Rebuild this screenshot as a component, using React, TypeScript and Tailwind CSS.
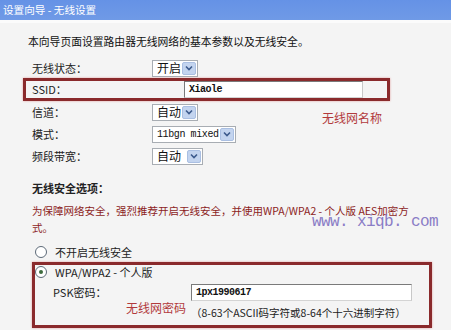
import React from "react";

const cjk = "font-['Noto_Sans_CJK_SC','Noto_Sans',sans-serif]";
const mono = "font-['Liberation_Mono',monospace]";

const Arrow = () => (
  <span className="ml-auto mr-[1px] flex h-[13px] w-[14px] items-center justify-center rounded-[2px] bg-[#c3d4ef] border border-[#aabfe2]">
    <svg width="8" height="6" viewBox="0 0 8 6">
      <path d="M1 1.5 L4 4.5 L7 1.5" fill="none" stroke="#3c5a8c" strokeWidth="1.6" />
    </svg>
  </span>
);

const Select = ({ value, width, isMono }: { value: string; width: string; isMono?: boolean }) => (
  <div className={`flex h-[17px] items-center border border-[#a8adb3] bg-white pl-[4px] ${width}`}>
    <span className={isMono ? `${mono} text-[10px] tracking-[-0.4px] text-[#111]` : "text-[12px] text-[#111]"}>{value}</span>
    <Arrow />
  </div>
);

const Input = ({ value, width }: { value: string; width: string }) => (
  <div className={`flex h-[17px] items-center border border-[#7a7a7a] border-r-[#c8c8c8] border-b-[#d4d4d4] bg-white pl-[4px] ${width}`}>
    <span className={`${mono} text-[10px] font-bold tracking-[-0.5px] text-[#111]`}>{value}</span>
  </div>
);

const Radio = ({ checked }: { checked?: boolean }) => (
  <span className="flex h-[12px] w-[12px] items-center justify-center rounded-full border border-[#5d6a78] bg-white">
    {checked && <span className="h-[4px] w-[4px] rounded-full bg-[#3d6b3d]" />}
  </span>
);

const Row = ({ label, children }: { label: string; children: React.ReactNode }) => (
  <div className="flex h-[22px] items-center">
    <div className="w-[152px] pl-[32px]">{label}</div>
    {children}
  </div>
);

const App = () => {
  return (
    <div className={`relative h-[330px] w-[451px] overflow-hidden bg-[#f4f4f4] text-[11px] text-[#222] ${cjk}`}>
      <div className="flex h-[20px] items-center bg-gradient-to-b from-[#6592e6] to-[#6f9ae6] pl-[3px] text-[10.6px] text-white">
        设置向导 - 无线设置
      </div>
      <div className="h-[3px] bg-[#fbfbfb]" />

      <div className="mt-[7px] flex h-[22px] items-center pl-[28px] text-[10.8px] text-[#111]">
        本向导页面设置路由器无线网络的基本参数以及无线安全。
      </div>

      <div className="mt-[6px] flex h-[20px] items-center">
        <div className="w-[152px] pl-[32px]">无线状态：</div>
        <Select value="开启" width="w-[46px]" />
      </div>

      <div className="ml-[23px] flex h-[23px] w-[367px] items-center border-[3px] border-[#8a2a2c] shadow-[0_0_2px_#e3a0a0]">
        <div className="w-[158px] pl-[6px]">SSID：</div>
        <Input value="Xiaole" width="w-[179px]" />
      </div>

      <Row label="信道：">
        <Select value="自动" width="w-[46px]" />
      </Row>
      <Row label="模式：">
        <Select value="11bgn mixed" width="w-[84px]" isMono />
      </Row>
      <Row label="频段带宽：">
        <Select value="自动" width="w-[51px]" />
      </Row>

      <div className="mt-[11px] flex h-[20px] items-center pl-[32px] font-semibold">无线安全选项：</div>

      <div className="mt-[4px] pl-[32px] text-[10.5px] leading-[17px] text-[#8c1d1d] whitespace-nowrap">
        <div>为保障网络安全，强烈推荐开启无线安全，并使用WPA/WPA2 - 个人版 AES加密方</div>
        <div>式。</div>
      </div>

      <div className="mt-[6px] flex h-[20px] items-center pl-[35px]">
        <Radio />
        <span className="ml-[8px]">不开启无线安全</span>
      </div>

      <div className="ml-[32px] h-[66px] w-[400px] border-[3px] border-[#8a2a2c] shadow-[0_0_2px_#e3a0a0]">
        <div className="flex h-[14px] items-center">
          <Radio checked />
          <span className="ml-[8px]">WPA/WPA2 - 个人版</span>
        </div>
        <div className="mt-[3px] flex h-[20px] items-center">
          <div className="w-[156px] pl-[18px]">PSK密码：</div>
          <Input value="1px1990617" width="w-[221px]" />
        </div>
        <div className="mt-[3px] flex h-[16px] items-center pl-[156px] text-[10.5px]">
          （8-63个ASCII码字符或8-64个十六进制字符）
        </div>
      </div>

      <div className="absolute left-[322px] top-[109px] text-[12px] text-[#b23a3c]">无线网名称</div>
      <div className="absolute left-[126px] top-[299px] text-[12px] text-[#b23a3c]">无线网密码</div>
      <div className={`absolute left-[312px] top-[212px] ${mono} text-[16px] leading-[20px] tracking-[-0.6px] text-[#8a7cc6]`}>
        www. xiqb. com
      </div>
    </div>
  );
};

export default App;
